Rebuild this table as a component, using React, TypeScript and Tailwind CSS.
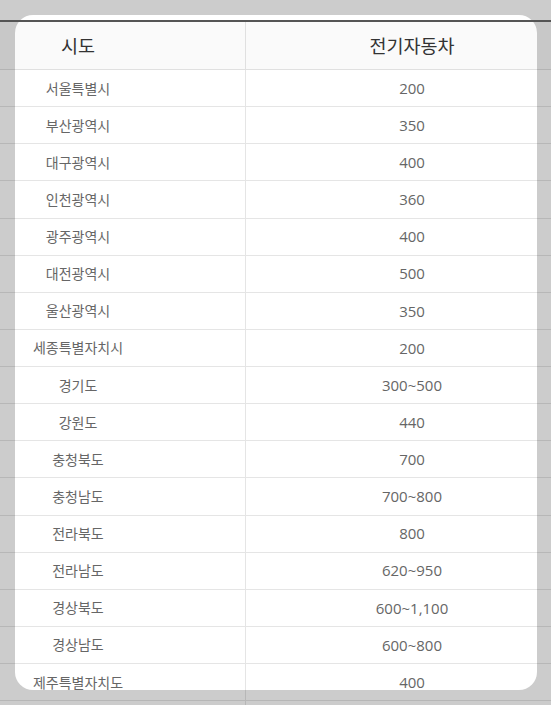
const rows: [string, string][] = [
  ['서울특별시', '200'],
  ['부산광역시', '350'],
  ['대구광역시', '400'],
  ['인천광역시', '360'],
  ['광주광역시', '400'],
  ['대전광역시', '500'],
  ['울산광역시', '350'],
  ['세종특별자치시', '200'],
  ['경기도', '300~500'],
  ['강원도', '440'],
  ['충청북도', '700'],
  ['충청남도', '700~800'],
  ['전라북도', '800'],
  ['전라남도', '620~950'],
  ['경상북도', '600~1,100'],
  ['경상남도', '600~800'],
  ['제주특별자치도', '400'],
  ['', ''],
]

export default function App() {
  return (
    <div
      className="relative h-[705px] w-[551px] overflow-hidden bg-[#cccccc] p-[15px]"
      style={{ fontFamily: '"Open Sans", "Noto Sans CJK KR", sans-serif' }}
    >
      {/* white panel behind the table */}
      <div className="h-[675px] w-[522px] rounded-[18px] bg-white" />

      <div className="absolute inset-x-0 top-[20px]">
        <div className="border-t-2 border-[#555555]">
          <div className="flex h-[48px] border-b border-black/10 bg-black/[0.02] text-[18.5px] text-[#333333]">
            <div className="flex w-[246px] items-center justify-center border-r border-black/10 pr-[89px]">
              시도
            </div>
            <div className="flex flex-1 items-center justify-center pl-[27px]">전기자동차</div>
          </div>
          {rows.map(([region, amount], idx) => (
            <div key={idx} className="flex h-[37.125px] border-b border-black/10 text-[#666666]">
              <div className="flex w-[246px] items-center justify-center border-r border-black/10 pr-[89px] text-[14px]">
                {region}
              </div>
              <div className="flex flex-1 items-center justify-center pl-[27px] text-[15px]">{amount}</div>
            </div>
          ))}
        </div>
      </div>
    </div>
  )
}
